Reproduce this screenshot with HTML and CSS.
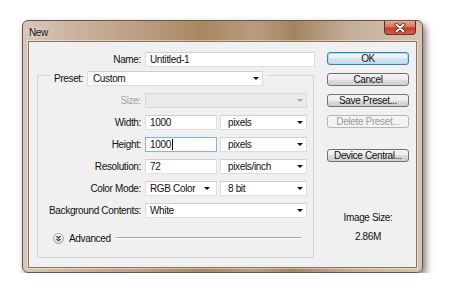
FILE: index.html
```html
<!DOCTYPE html>
<html lang="en">
<head>
    <meta charset="UTF-8">
    <title>New</title>
    <link rel="stylesheet" href="styles.css">
</head>
<body>
    <div class="window">
        <div class="titlebar">
            <span class="title">New</span>
            <div class="close">
                <svg width="12" height="10" viewBox="0 0 12 10">
                    <path d="M2.5 1.5 L9.5 8.5 M9.5 1.5 L2.5 8.5" stroke="#5a1d14" stroke-width="3.6" stroke-linecap="round"/>
                    <path d="M2.5 1.5 L9.5 8.5 M9.5 1.5 L2.5 8.5" stroke="#fff" stroke-width="2" stroke-linecap="round"/>
                </svg>
            </div>
        </div>

        <div class="client">
            <div class="form">
                <div class="row name-row">
                    <span class="label">Name:</span>
                    <div class="field w170">Untitled-1</div>
                </div>

                <div class="group">
                    <div class="row preset">
                        <span class="preset-label">Preset:</span>
                        <div class="field select w176">Custom<span class="arrow"></span></div>
                    </div>
                    <div class="row gap first">
                        <span class="label off">Size:</span>
                        <div class="field select disabled w162"><span class="arrow"></span></div>
                    </div>
                    <div class="row gap">
                        <span class="label">Width:</span>
                        <div class="field w72">1000</div>
                        <div class="field select unit">pixels<span class="arrow"></span></div>
                    </div>
                    <div class="row gap">
                        <span class="label">Height:</span>
                        <div class="field w72 focus">1000<span class="caret"></span></div>
                        <div class="field select unit">pixels<span class="arrow"></span></div>
                    </div>
                    <div class="row gap">
                        <span class="label">Resolution:</span>
                        <div class="field w72">72</div>
                        <div class="field select unit">pixels/inch<span class="arrow"></span></div>
                    </div>
                    <div class="row gap">
                        <span class="label">Color Mode:</span>
                        <div class="field select w72 mode">RGB Color<span class="arrow"></span></div>
                        <div class="field select unit">8 bit<span class="arrow"></span></div>
                    </div>
                    <div class="row gap">
                        <span class="label">Background Contents:</span>
                        <div class="field select w162">White<span class="arrow"></span></div>
                    </div>
                    <div class="advanced">
                        <svg class="chevron" width="11" height="11" viewBox="0 0 11 11">
                            <defs>
                                <linearGradient id="cg" x1="0" y1="0" x2="0" y2="1">
                                    <stop offset="0" stop-color="#ffffff"/>
                                    <stop offset="1" stop-color="#d2d2d2"/>
                                </linearGradient>
                            </defs>
                            <circle cx="5.5" cy="5.5" r="5" fill="url(#cg)" stroke="#a2a2a2"/>
                            <path d="M3.5 3.2 L5.5 5 L7.5 3.2 M3.5 5.8 L5.5 7.6 L7.5 5.8" fill="none" stroke="#222" stroke-width="1.1"/>
                        </svg>
                        <span class="adv-text">Advanced</span>
                        <span class="rule"></span>
                    </div>
                </div>
            </div>

            <div class="side">
                <div class="btn ok">OK</div>
                <div class="btn">Cancel</div>
                <div class="btn">Save Preset...</div>
                <div class="btn off">Delete Preset...</div>
                <div class="btn device">Device Central...</div>
                <div class="size-title">Image Size:</div>
                <div class="size-value">2.86M</div>
            </div>
        </div>
    </div>
</body>
</html>
```

FILE: styles.css
```css
html, body {
    margin: 0;
    padding: 0;
    background: #ffffff;
}
body {
    font-family: "Liberation Sans", Arial, sans-serif;
    font-size: 10px;
    letter-spacing: -0.35px;
    color: #111111;
}
.window {
    margin: 20px 0 0 22px;
    width: 401px;
    height: 253px;
    box-sizing: border-box;
    border: 1px solid #6b5646;
    border-radius: 6px;
    padding: 0 5px 4px 5px;
    background: linear-gradient(90deg, #d6c7b9 0%, #cbb5a1 12%, #bb9d81 30%, #a8875f 45%, #b99c80 58%, #a4845f 68%, #c4ae9a 82%, #d4c4b5 100%);
    box-shadow: 3px 4px 7px rgba(0, 0, 0, 0.5);
}
.titlebar {
    height: 20px;
    display: flex;
    justify-content: space-between;
    align-items: flex-start;
}
.title {
    padding: 6px 0 0 1px;
    color: #111111;
    text-shadow: 0 0 5px rgba(255, 255, 255, 0.8);
}
.close {
    width: 32px;
    height: 14px;
    box-sizing: border-box;
    margin-right: 1px;
    border: 1px solid #6e2a20;
    border-top: 0;
    border-radius: 0 0 4px 4px;
    background: linear-gradient(#e9a692 0%, #d77059 45%, #c23c22 55%, #d3644c 100%);
    display: flex;
    align-items: center;
    justify-content: center;
}
.client {
    height: 227px;
    box-sizing: border-box;
    border: 1px solid #8a735f;
    box-shadow: 0 0 0 1px rgba(255, 255, 255, 0.45);
    background: #f0f0f0;
    display: flex;
}
.form {
    width: 290px;
    padding-top: 10px;
}
.row {
    display: flex;
    align-items: center;
    height: 15px;
}
.label {
    width: 103px;
    margin-right: 4px;
    text-align: right;
    white-space: nowrap;
}
.name-row .label {
    width: 112px;
}
.label.off {
    color: #a3a3a3;
}
.field {
    height: 15px;
    box-sizing: border-box;
    border: 1px solid #dedede;
    border-top-color: #cfcfcf;
    background: #ffffff;
    padding: 0 4px;
    display: flex;
    align-items: center;
    color: #111111;
    white-space: nowrap;
}
.w170 { width: 170px; }
.w176 { width: 176px; }
.w162 { width: 162px; }
.w72 { width: 72px; }
.select {
    justify-content: space-between;
    padding: 0 3px 0 4px;
}
.preset .select {
    padding-left: 5px;
}
.unit {
    width: 87px;
    margin-left: 3px;
    padding-left: 7px;
}
.mode {
    padding-right: 6px;
}
.arrow {
    width: 0;
    height: 0;
    border-left: 3px solid transparent;
    border-right: 3px solid transparent;
    border-top: 3px solid #111111;
}
.disabled {
    background: #ebebeb;
    border-color: #d8d8d8;
    justify-content: flex-end;
}
.disabled .arrow {
    border-top-color: #a8a8a8;
}
.focus {
    border-color: #7eb4ea;
}
.caret {
    display: inline-block;
    width: 1px;
    height: 11px;
    margin-left: 1px;
    background: #000000;
}
.group {
    margin: 8px 0 0 8px;
    width: 277px;
    height: 183px;
    box-sizing: border-box;
    border: 1px solid #d3d3d3;
    display: flex;
    flex-direction: column;
}
.preset {
    align-self: flex-start;
    margin: -5px 0 0 12px;
    padding: 0 5px 0 4px;
    background: #f0f0f0;
}
.preset-label {
    width: 29px;
    margin-right: 4px;
}
.gap {
    margin-top: 7px;
}
.advanced {
    display: flex;
    align-items: center;
    height: 12px;
    margin: 14px 12px 0 15px;
}
.chevron {
    display: block;
}
.adv-text {
    margin-left: 5px;
}
.rule {
    flex: 1;
    margin-left: 5px;
    border-top: 1px solid #a4a4a4;
    border-bottom: 1px solid #ffffff;
}
.side {
    width: 82px;
    margin-left: 8px;
    padding-top: 10px;
    text-align: center;
}
.btn {
    height: 13px;
    box-sizing: border-box;
    border: 1px solid #707070;
    border-radius: 3px;
    background: linear-gradient(#f4f4f4 0%, #ececec 50%, #dedede 50%, #d0d0d0 100%);
    line-height: 11px;
    margin-bottom: 8px;
    color: #111111;
}
.btn.ok {
    border-color: #3c7fb1;
    box-shadow: inset 0 0 0 1px #a6e3fb;
    background: linear-gradient(#f2f7fa 0%, #e8f0f5 50%, #d6e4ec 50%, #c9dbe6 100%);
}
.btn.off {
    border-color: #b2b6b9;
    background: #f4f4f4;
    color: #9c9c9c;
}
.btn.device {
    margin-top: 21px;
}
.size-title {
    margin-top: 50px;
    line-height: 12px;
}
.size-value {
    margin-top: 7px;
    line-height: 12px;
}
```
